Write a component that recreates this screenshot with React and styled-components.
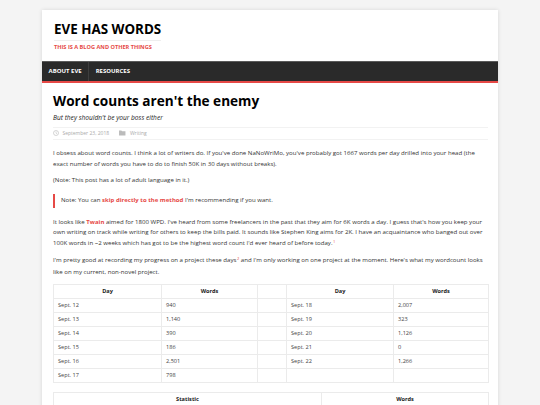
import React from "react";
import styled, { createGlobalStyle } from "styled-components";

const Global = createGlobalStyle`
  html, body { margin: 0; padding: 0; background: #f4f4f4; }
  body { font-family: "Open Sans", "Liberation Sans", sans-serif; color: #333; }
  * { box-sizing: border-box; }
`;

const Page = styled.div`
  padding-top: 10px;
  display: flex;
  justify-content: center;
`;

const Wrapper = styled.div`
  width: 456px;
  background: #fff;
  box-shadow: 0 0 4px rgba(0,0,0,0.12);
  min-height: 400px;
`;

const Header = styled.header`
  padding: 7px 12px 10px;
`;

const SiteTitle = styled.div`
  display: inline-block;
  font-size: 13.4px;
  font-weight: 700;
  line-height: 18px;
  color: #000;
  padding-bottom: 2px;
  border-bottom: 1px solid #eee;
`;

const Tagline = styled.div`
  font-size: 5.6px;
  font-weight: 700;
  color: #e64946;
  text-transform: uppercase;
  margin-top: 2px;
  line-height: 8px;
`;

const Nav = styled.nav`
  background: #2a2a2a;
  border-top: 1px solid #5a5a5a;
  border-bottom: 2.5px solid #e64946;
  display: flex;
  height: 21.5px;
`;

const NavItem = styled.div`
  color: #fff;
  font-size: 6px;
  font-weight: 700;
  text-transform: uppercase;
  padding: 0 6.5px;
  display: flex;
  align-items: center;
  border-left: ${p => (p.$first ? "none" : "1px solid #3e3e3e")};
`;

const Main = styled.main`
  padding: 8.5px 10px 0 11px;
`;

const Title = styled.h1`
  margin: 0;
  font-size: 13.6px;
  font-weight: 700;
  color: #000;
  line-height: 20px;
`;

const Subtitle = styled.div`
  font-size: 6.6px;
  font-style: italic;
  color: #222;
  margin-top: 1.5px;
  line-height: 10px;
`;

const Meta = styled.div`
  margin-top: 4px;
  border-top: 1px solid #f2f2f2;
  border-bottom: 1px solid #f2f2f2;
  height: 13.3px;
  display: flex;
  align-items: center;
  gap: 10px;
  font-size: 5px;
  color: #aaa;
`;

const MetaItem = styled.span`
  display: flex;
  align-items: center;
  gap: ${p => p.$gap || 3.4}px;
`;

const Para = styled.p`
  margin: ${p => p.$first ? 8.5 : 5.3}px 0 0;
  font-size: 6.1px;
  line-height: 10.7px;
  color: #333;
`;

const Quote = styled.blockquote`
  margin: 8px 0 9px;
  border-left: 2px solid #e64946;
  padding: 1.7px 0 1.7px 6px;
  font-size: 6.1px;
  line-height: 10.7px;
  color: #333;
  & + p { margin-top: 0; }
`;

const Link = styled.span`
  color: #e64946;
  font-weight: 700;
  font-size: 6px;
`;

const Sup = styled.span`
  color: #e64946;
  font-size: 4px;
  position: relative;
  top: -2.5px;
  margin-left: 0.5px;
`;

const Table = styled.table`
  margin-top: ${p => p.$mt}px;
  width: 435px;
  border-collapse: collapse;
  table-layout: fixed;
  font-size: 5.6px;
  color: #444;
`;

const Th = styled.th`
  border: 1px solid #ebebeb;
  height: 14px;
  font-weight: 700;
  color: #222;
  text-align: center;
  padding: 0 4px;
`;

const Td = styled.td`
  border: 1px solid #ebebeb;
  height: 14px;
  padding: 0 4px;
  text-align: left;
`;

const Clock = () => (
  <svg width="6" height="6" viewBox="0 0 12 12">
    <circle cx="6" cy="6" r="5" fill="none" stroke="#bbb" strokeWidth="1.2" />
    <path d="M6 3v3.3l2 1.2" fill="none" stroke="#bbb" strokeWidth="1.1" />
  </svg>
);

const Folder = () => (
  <svg width="6.5" height="5.5" viewBox="0 0 14 12">
    <path d="M0 1h5l1.5 1.5H14V12H0z" fill="#bbb" />
  </svg>
);

const rows = [
  ["Sept. 12", "940", "Sept. 18", "2,007"],
  ["Sept. 13", "1,140", "Sept. 19", "323"],
  ["Sept. 14", "390", "Sept. 20", "1,126"],
  ["Sept. 15", "186", "Sept. 21", "0"],
  ["Sept. 16", "2,501", "Sept. 22", "1,266"],
  ["Sept. 17", "798", "", ""],
];

export default function App() {
  return (
    <>
      <Global />
      <Page>
        <Wrapper>
          <Header>
            <SiteTitle>EVE HAS WORDS</SiteTitle>
            <Tagline>This is a blog and other things</Tagline>
          </Header>
          <Nav>
            <NavItem $first>About Eve</NavItem>
            <NavItem>Resources</NavItem>
          </Nav>
          <Main>
            <Title>Word counts aren't the enemy</Title>
            <Subtitle>But they shouldn't be your boss either</Subtitle>
            <Meta>
              <MetaItem><Clock />September 23, 2018</MetaItem>
              <MetaItem $gap={4.3}><Folder />Writing</MetaItem>
            </Meta>
            <Para $first>
              I obsess about word counts. I think a lot of writers do. If you've done NaNoWriMo, you've probably got 1667 words per day drilled into your head (the exact number of words you have to do to finish 50K in 30 days without breaks).
            </Para>
            <Para>(Note: This post has a lot of adult language in it.)</Para>
            <Quote>
              Note: You can <Link>skip directly to the method</Link> I'm recommending if you want.
            </Quote>
            <Para>
              It looks like <Link>Twain</Link> aimed for 1800 WPD. I've heard from some freelancers in the past that they aim for 6K words a day. I guess that's how you keep your own writing on track while writing for others to keep the bills paid. It sounds like Stephen King aims for 2K. I have an acquaintance who banged out over 100K words in ~2 weeks which has got to be the highest word count I'd ever heard of before today.<Sup>1</Sup>
            </Para>
            <Para>
              I'm pretty good at recording my progress on a project these days<Sup>2</Sup> and I'm only working on one project at the moment. Here's what my wordcount looks like on my current, non-novel project.
            </Para>
            <Table $mt={6}>
              <colgroup>
                <col style={{ width: 108 }} />
                <col style={{ width: 96 }} />
                <col style={{ width: 29 }} />
                <col style={{ width: 107 }} />
                <col style={{ width: 95 }} />
              </colgroup>
              <thead>
                <tr><Th>Day</Th><Th>Words</Th><Th /><Th>Day</Th><Th>Words</Th></tr>
              </thead>
              <tbody>
                {rows.map((r, i) => (
                  <tr key={i}><Td>{r[0]}</Td><Td>{r[1]}</Td><Td /><Td>{r[2]}</Td><Td>{r[3]}</Td></tr>
                ))}
              </tbody>
            </Table>
            <Table $mt={9.3}>
              <colgroup>
                <col style={{ width: 268 }} />
                <col style={{ width: 167 }} />
              </colgroup>
              <thead>
                <tr><Th>Statistic</Th><Th>Words</Th></tr>
              </thead>
            </Table>
          </Main>
        </Wrapper>
      </Page>
    </>
  );
}
